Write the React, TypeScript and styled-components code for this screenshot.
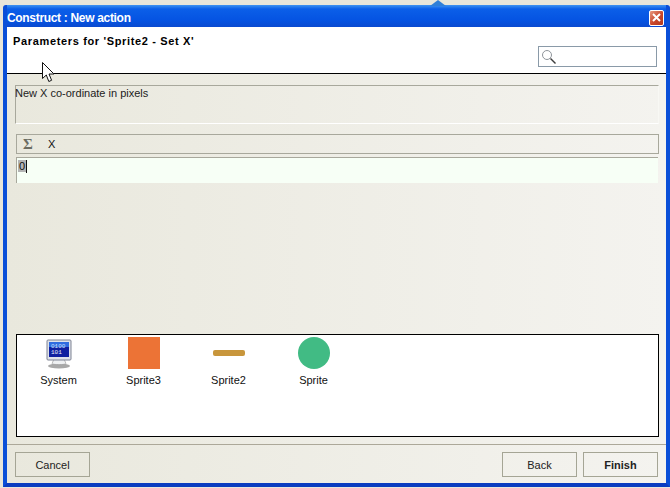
import * as React from 'react'
import styled, { createGlobalStyle } from 'styled-components';

const GlobalStyle = createGlobalStyle`
    html, body {
        margin: 0;
        padding: 0;
        background: #e8e6da;
    }
    body {
        font-family: "Liberation Sans", Arial, sans-serif;
        font-size: 11px;
        color: #111;
    }
`

const objects = ['System', 'Sprite3', 'Sprite2', 'Sprite'];

const ObjectIcon = ({ name }: { name: string }) => {
    if (name === 'System') return <SystemIcon />;
    if (name === 'Sprite3') return <OrangeSquare />;
    if (name === 'Sprite2') return <TanBar />;
    return <GreenCircle />;
};

const SystemIcon = () => (
    <svg width="32" height="32" viewBox="0 0 32 32">
        <ellipse cx="16" cy="29" rx="11" ry="2.5" fill="#a8a8a8" />
        <path d="M11 22h10l2 4.5c0 1.5-14 1.5-14 0z" fill="#eef0f2" stroke="#8f8f8f" strokeWidth="0.6" />
        <rect x="4" y="3" width="24" height="20" rx="1" fill="#dfe2ea" stroke="#7f8494" strokeWidth="1" />
        <rect x="6" y="5" width="20" height="15" fill="#0f1fa0" />
        <rect x="6" y="5" width="20" height="5" fill="#2f6ce0" />
        <text x="8" y="10.5" fontSize="6" fontFamily="Liberation Mono, monospace" fill="#cfe4ff">0100</text>
        <text x="8" y="17" fontSize="6" fontFamily="Liberation Mono, monospace" fill="#e8f2ff">101</text>
    </svg>
);

const SearchIcon = () => (
    <svg width="16" height="16" viewBox="0 0 16 16">
        <circle cx="6" cy="6" r="4.5" fill="#fff" stroke="#8f959b" strokeWidth="1" />
        <path d="M9.5 9.5L14.5 14.5" stroke="#3d3d3d" strokeWidth="1.4" />
    </svg>
);

const Cursor = () => (
    <svg width="13" height="21" viewBox="0 0 13 21">
        <path d="M0.5 0.5V16.5L4.3 13L6.8 19.5L9.6 18.3L7 12H12z" fill="#fff" stroke="#111" strokeWidth="1" />
    </svg>
);

const CloseIcon = () => (
    <svg width="9" height="9" viewBox="0 0 9 9">
        <path d="M1 1L8 8M8 1L1 8" stroke="#fff" strokeWidth="2" />
    </svg>
);

const App = () => {
    return (
        <Page>
            <GlobalStyle />
            <TopNotch />
            <Window>
                <TitleBar>
                    <TitleText>Construct : New action</TitleText>
                    <CloseButton><CloseIcon /></CloseButton>
                </TitleBar>
                <Header>
                    <HeaderTitle>Parameters for 'Sprite2 - Set X'</HeaderTitle>
                    <SearchBox><SearchIcon /></SearchBox>
                </Header>
                <Body>
                    <Description>New X co-ordinate in pixels</Description>
                    <ParamBar>
                        <Sigma>Σ</Sigma>
                        <span>X</span>
                    </ParamBar>
                    <ParamInput>
                        <Selected>0</Selected>
                        <Caret />
                    </ParamInput>
                    <ObjectList>
                        {objects.map((name) => (
                            <ObjectItem key={name}>
                                <IconSlot><ObjectIcon name={name} /></IconSlot>
                                <span>{name}</span>
                            </ObjectItem>
                        ))}
                    </ObjectList>
                </Body>
                <Footer>
                    <Button>Cancel</Button>
                    <FooterRight>
                        <Button>Back</Button>
                        <Button $primary>Finish</Button>
                    </FooterRight>
                </Footer>
            </Window>
            <CursorWrap><Cursor /></CursorWrap>
        </Page>
    )
};

export default App;

const Page = styled.div`
    position: relative;
    width: 670px;
    height: 488px;
    padding: 5px 0 1px 3px;
    box-sizing: border-box;
    overflow: hidden;
`

const TopNotch = styled.div`
    position: absolute;
    left: 430px;
    top: 0;
    width: 0;
    height: 0;
    border-left: 8px solid transparent;
    border-right: 8px solid transparent;
    border-bottom: 6px solid #2f7fd8;
`

const Window = styled.div`
    height: 100%;
    display: flex;
    flex-direction: column;
    box-sizing: border-box;
    border: 4px solid #0a4fd8;
    border-top: none;
    border-bottom-color: #0a3cc0;
    border-radius: 3px 3px 0 0;
    background: #0a52e0;
`

const TitleBar = styled.div`
    height: 22px;
    flex: none;
    display: flex;
    align-items: center;
    justify-content: space-between;
    padding: 3px 2px 0 0;
    box-sizing: border-box;
    background: linear-gradient(180deg, #3f93f0 0%, #0b5fe8 18%, #0553e2 70%, #0a4ad0 100%);
`

const TitleText = styled.div`
    color: #fff;
    font-size: 12px;
    font-weight: bold;
    letter-spacing: -0.32px;
`

const CloseButton = styled.div`
    width: 13px;
    height: 14px;
    display: flex;
    align-items: center;
    justify-content: center;
    background: linear-gradient(135deg, #e89a80, #c8452a 55%, #b03a20);
    border: 1px solid #fff;
    border-radius: 2px;
`

const Header = styled.div`
    height: 47px;
    flex: none;
    position: relative;
    display: flex;
    justify-content: space-between;
    padding: 8px 9px 0 6px;
    box-sizing: border-box;
    background: #fff;
    border-bottom: 1px solid #000;
`

const HeaderTitle = styled.div`
    font-size: 11px;
    font-weight: bold;
    letter-spacing: 0.65px;
    color: #000;
`

const SearchBox = styled.div`
    width: 119px;
    height: 21px;
    margin-top: 11px;
    padding: 2px 0 0 2px;
    box-sizing: border-box;
    border: 1px solid #8a9aa8;
    background: #fff;
`

const Body = styled.div`
    flex: 1;
    display: flex;
    flex-direction: column;
    padding: 11px 7px 7px 8px;
    background: linear-gradient(90deg, #e9e8dd 0%, #f4f3ef 100%);
    border-bottom: 1px solid #aca899;
    box-shadow: 0 1px 0 #fff;
`

const Description = styled.div`
    height: 39px;
    box-sizing: border-box;
    padding: 1px 0 0 0;
    text-indent: -1px;
    border-top: 1px solid #a8a89c;
    border-left: 1px solid #a8a89c;
    border-right: 1px solid #f8f8f4;
    border-bottom: 1px solid #fff;
    color: #222;
`

const ParamBar = styled.div`
    height: 20px;
    margin: 10px 0 0 1px;
    display: flex;
    align-items: center;
    box-sizing: border-box;
    border: 1px solid #a8a89c;
    color: #111;
`

const Sigma = styled.span`
    width: 31px;
    padding-left: 6px;
    box-sizing: border-box;
    font-family: "Liberation Serif", serif;
    font-size: 15px;
    font-weight: bold;
    color: #6c6c62;
`

const ParamInput = styled.div`
    height: 26px;
    margin: 3px 1px 0 1px;
    display: flex;
    align-items: flex-start;
    padding: 2px 0 0 1px;
    box-sizing: border-box;
    background: #f7fff6;
    border-top: 1px solid #a8a89c;
    border-left: 1px solid #a8a89c;
`

const Selected = styled.span`
    background: #b4b4b4;
    line-height: 12px;
    padding: 0 1px;
`

const Caret = styled.span`
    width: 1px;
    height: 13px;
    background: #111;
`

const ObjectList = styled.div`
    height: 103px;
    margin: auto 0 0 1px;
    display: flex;
    padding: 2px 0 0 0;
    box-sizing: border-box;
    border: 1px solid #000;
    background: #fff;
`

const ObjectItem = styled.div`
    width: 85px;
    display: flex;
    flex-direction: column;
    align-items: center;
    gap: 5px;
    color: #111;

    &:first-child {
        margin-left: -1px;
    }
`

const IconSlot = styled.div`
    width: 32px;
    height: 32px;
    display: flex;
    align-items: center;
    justify-content: center;
`

const OrangeSquare = styled.div`
    width: 32px;
    height: 32px;
    background: #ec7336;
`

const TanBar = styled.div`
    width: 32px;
    height: 6px;
    border-radius: 2px;
    background: #c8963c;
`

const GreenCircle = styled.div`
    width: 32px;
    height: 32px;
    border-radius: 50%;
    background: #41bb84;
`

const Footer = styled.div`
    height: 38px;
    flex: none;
    display: flex;
    justify-content: space-between;
    padding: 7px 8px 0 8px;
    box-sizing: border-box;
    background: linear-gradient(90deg, #e9e8dd 0%, #f4f3ef 100%);
`

const FooterRight = styled.div`
    display: flex;
    gap: 6px;
`

const Button = styled.div<{ $primary?: boolean }>`
    width: 75px;
    height: 25px;
    display: flex;
    align-items: center;
    justify-content: center;
    box-sizing: border-box;
    border: 1px solid #a5a595;
    color: #222;
    font-weight: ${(props) => (props.$primary ? 'bold' : 'normal')};
`

const CursorWrap = styled.div`
    position: absolute;
    left: 42px;
    top: 62px;
    line-height: 0;
`
